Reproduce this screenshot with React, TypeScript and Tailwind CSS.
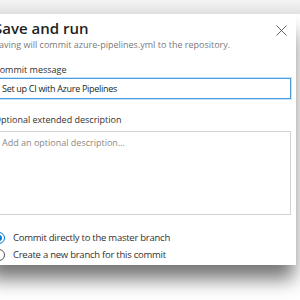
import React from "react";

export default function App() {
  const font = { fontFamily: '"Open Sans", "Noto Sans", sans-serif' };
  return (
    <div className="w-[300px] h-[300px] bg-white overflow-hidden" style={font}>
      <div className="h-[14px] bg-gradient-to-b from-[#f4f4f4] to-[#e3e3e3]" />
      <div className="ml-[-14px] w-[310px] h-[251px] bg-white shadow-[0_16px_18px_-2px_rgba(0,0,0,0.55)] pl-[8px] pr-[5px] pt-[4px]">
        <div className="flex items-start justify-between">
          <div>
            <div className="text-[15px] leading-[20px] font-semibold text-[#201f1e]">Save and run</div>
            <div className="mt-[1px] text-[9px] leading-[12px] text-[#7a7a7a]">
              Saving will commit azure-pipelines.yml to the repository.
            </div>
          </div>
          <svg width="11" height="11" viewBox="0 0 11 11" className="mt-[7px] mr-[4px]">
            <path d="M0.5 0.5 L10.5 10.5 M10.5 0.5 L0.5 10.5" stroke="#666" strokeWidth="1" />
          </svg>
        </div>
        <div className="mt-[13px] text-[9px] leading-[12px] text-[#323130]">Commit message</div>
        <div className="mt-[2px] h-[21px] border border-[#4a9ee0] shadow-[0_0_0_1px_#c4e2fa] flex items-center pl-[7px] text-[9px] tracking-[-0.3px] text-[#201f1e]">
          Set up CI with Azure Pipelines
        </div>
        <div className="mt-[15px] text-[9px] leading-[12px] text-[#323130]">Optional extended description</div>
        <div className="mt-[5px] h-[84px] border border-[#d2d2d2] pl-[7px] pt-[5px] text-[9px] leading-[12px] text-[#8a8886]">
          Add an optional description...
        </div>
        <div className="mt-[16px] flex flex-col gap-[3px] text-[9.5px] tracking-[-0.25px] text-[#323130]">
          <div className="flex items-center gap-[8px] ml-[-1px] h-[14px]">
            <span className="w-[12px] h-[12px] rounded-full border-[1.5px] border-[#0078d4] flex items-center justify-center">
              <span className="w-[6px] h-[6px] rounded-full bg-[#0078d4]" />
            </span>
            <span className="leading-[14px]">Commit directly to the master branch</span>
          </div>
          <div className="flex items-center gap-[8px] ml-[-1px] h-[14px]">
            <span className="w-[12px] h-[12px] rounded-full border border-[#555]" />
            <span className="leading-[14px]">Create a new branch for this commit</span>
          </div>
        </div>
      </div>
    </div>
  );
}
